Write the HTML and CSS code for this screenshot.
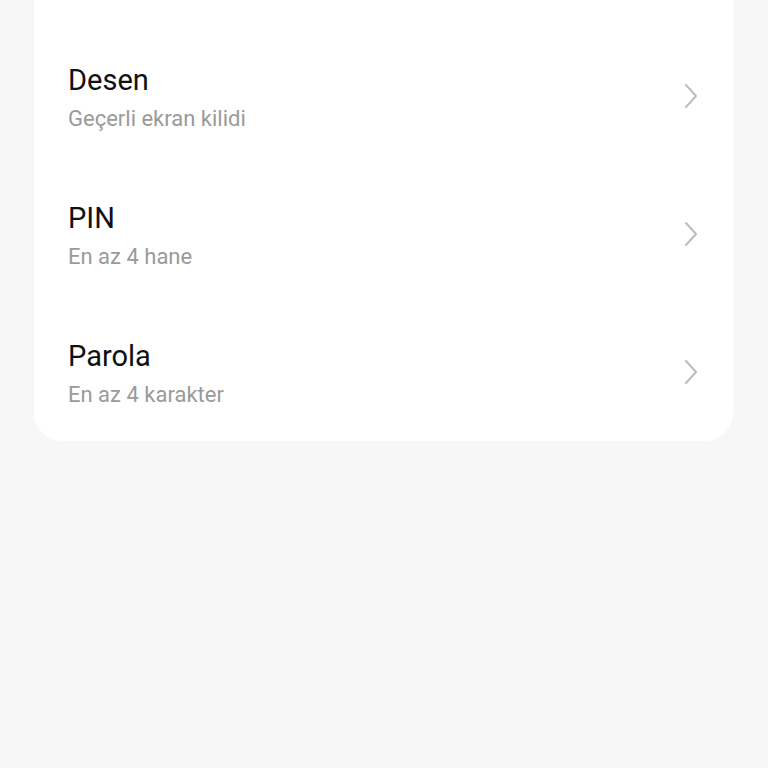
FILE: index.html
```html
<!DOCTYPE html>
<html lang="tr">
<head>
  <meta charset="UTF-8">
  <meta name="viewport" content="width=device-width, initial-scale=1.0">
  <title>Ekran kilidi</title>
  <link rel="stylesheet" href="styles.css">
</head>
<body>
  <div class="card">
    <div class="row">
      <div class="text">
        <div class="title">Desen</div>
        <div class="subtitle">Geçerli ekran kilidi</div>
      </div>
      <svg class="chevron" viewBox="0 0 14 26"><path d="M2 2 L12 13 L2 24"/></svg>
    </div>
    <div class="row">
      <div class="text">
        <div class="title">PIN</div>
        <div class="subtitle">En az 4 hane</div>
      </div>
      <svg class="chevron" viewBox="0 0 14 26"><path d="M2 2 L12 13 L2 24"/></svg>
    </div>
    <div class="row">
      <div class="text">
        <div class="title">Parola</div>
        <div class="subtitle">En az 4 karakter</div>
      </div>
      <svg class="chevron" viewBox="0 0 14 26"><path d="M2 2 L12 13 L2 24"/></svg>
    </div>
  </div>
</body>
</html>
```

FILE: styles.css
```css
body {
  margin: 0;
  padding: 0;
  background-color: #f7f7f7;
  font-family: Roboto, "Noto Sans", sans-serif;
  height: 768px;
}

.card {
  background: #ffffff;
  margin: -40px 35px 0 34px;
  padding-top: 68px;
  border-radius: 28px;
}

.row {
  display: flex;
  align-items: center;
  justify-content: space-between;
  padding: 35px 35px 33px 34px;
}

.row:last-child {
  padding-bottom: 32px;
}

.text {
  display: flex;
  flex-direction: column;
  gap: 8px;
}

.title {
  font-size: 29px;
  line-height: 34px;
  color: #111111;
}

.subtitle {
  font-size: 22px;
  line-height: 28px;
  color: #9a9a9a;
}

.chevron {
  width: 14px;
  height: 26px;
  margin-bottom: 5px;
  fill: none;
  stroke: #bdbdbd;
  stroke-width: 2;
  stroke-linecap: round;
  stroke-linejoin: round;
}
```
